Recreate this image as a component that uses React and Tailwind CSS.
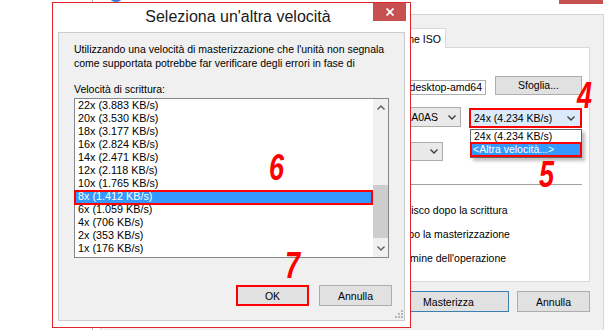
import React from 'react';

const speeds = [
  ['22x', '3.883'],
  ['20x', '3.530'],
  ['18x', '3.177'],
  ['16x', '2.824'],
  ['14x', '2.471'],
  ['12x', '2.118'],
  ['10x', '1.765'],
  ['8x', '1.412'],
  ['6x', '1.059'],
  ['4x', '706'],
  ['2x', '353'],
  ['1x', '176'],
];

function ChevronDown({ className = '' }) {
  return (
    <svg width="8" height="5" viewBox="0 0 8 5" fill="none" stroke="currentColor" strokeWidth="1.4" className={className}>
      <path d="M0.5 0.5 4 4 7.5 0.5" />
    </svg>
  );
}

function ChevronUp({ className = '' }) {
  return (
    <svg width="8" height="5" viewBox="0 0 8 5" fill="none" stroke="currentColor" strokeWidth="1.4" className={className}>
      <path d="M0.5 4.5 4 1 7.5 4.5" />
    </svg>
  );
}

function CloseX() {
  return (
    <svg width="8" height="8" viewBox="0 0 8 8" stroke="white" strokeWidth="1.8">
      <path d="M0.5 0.5 7.5 7.5M7.5 0.5 0.5 7.5" />
    </svg>
  );
}

// red step numbers drawn over the screenshot
function Marker({ n, className }) {
  return (
    <span className={`absolute z-20 origin-left scale-x-75 text-[36px] leading-none font-bold italic text-[#ff0000] ${className}`}>
      {n}
    </span>
  );
}

function Combo({ value, className = '' }) {
  return (
    <div className={`flex items-center justify-end gap-[10px] overflow-hidden whitespace-nowrap border border-[#acacac] bg-[#e9e9e9] pr-[4px] ${className}`}>
      <span>{value}</span>
      <ChevronDown className="shrink-0 text-[#3c3c3c]" />
    </div>
  );
}

function BurnWindow() {
  return (
    <div className="absolute left-[92px] top-[-22px] flex h-[360px] w-[520px] flex-col border border-[#b4b4b4] bg-white">
      <div className="flex h-[35px] shrink-0 items-start">
        <div className="ml-[15px] mt-[7px] h-[16px] w-[16px] rounded-full bg-[#2f7bd6]" />
        <div className="flex-1 pl-[16px] pt-[6px] text-center text-[15px] leading-[20px] text-[#333333]">Masterizzazione ISO</div>
        <div className="mr-[8px] flex h-[25px] w-[44px] items-end justify-center bg-[#c75050] pb-[6px]">
          <CloseX />
        </div>
      </div>

      <div className="mx-[7px] flex flex-1 flex-col border border-[#d5d5d5] bg-[#f0f0f0] px-[13px] pt-[13px]">
        {/* tabs */}
        <div className="flex h-[19px] items-end">
          {['Disco dati', 'Disco audio', 'Copia disco'].map((t) => (
            <div key={t} className="flex h-[17px] w-[75px] items-center justify-center border border-b-0 border-[#d9d9d9] bg-[#f0f0f0]">
              {t}
            </div>
          ))}
          <div className="relative z-10 -mb-px flex h-[20px] items-center border border-b-0 border-[#d9d9d9] bg-white px-[4px]">
            Masterizzazione ISO
          </div>
        </div>

        {/* tab page */}
        <div className="flex h-[235px] flex-col border border-[#d9d9d9] bg-white px-[7px]">
          <div className="mt-[28px] flex h-[19px] items-start">
            <span className="w-[72px] leading-[19px]">Immagine:</span>
            <div className="mt-[4px] flex h-[15px] flex-1 justify-end overflow-hidden whitespace-nowrap border border-[#abadb3] bg-white pr-[3px] leading-[13px]">
              C:\Users\Utente\Downloads\ubuntu-14.04-desktop-amd64
            </div>
            <button className="ml-[9px] h-[19px] w-[87px] border border-[#adadad] bg-[#e1e1e1] leading-[17px]">Sfoglia...</button>
          </div>

          <div className="mt-[12px] flex h-[21px] items-start">
            <span className="w-[72px] leading-[20px]">Unità:</span>
            <Combo value="E: HL-DT-ST DVDRAM GH24NSB0 BA0AS" className="h-[20px] flex-1" />
            <div className="ml-[8px] mt-[1px] flex h-[20px] w-[113px] items-center justify-between border-2 border-[#ff0000] bg-[#dcebfc] pl-[3px] pr-[5px]">
              <span>24x (4.234 KB/s)</span>
              <ChevronDown className="text-[#3c3c3c]" />
            </div>
          </div>

          <div className="mt-[14px] flex h-[19px]">
            <span className="w-[72px] leading-[19px]">Copie:</span>
            <Combo value="" className="h-[19px] flex-1" />
            <div className="w-[139px]" />
          </div>

          <div className="mt-[23px] h-px bg-[#a0a0a0]" />

          <div className="mt-[13px] flex flex-col pl-[224px]">
            {['Espelli il disco dopo la scrittura', 'Chiudi dopo la masterizzazione', "Esci al termine dell'operazione"].map((t) => (
              <label key={t} className="flex h-[24px] items-center gap-[5px] whitespace-nowrap">
                <span className="h-[13px] w-[13px] shrink-0 border border-[#707070] bg-white" />
                {t}
              </label>
            ))}
          </div>
        </div>

        <div className="mt-[9px] flex justify-end gap-[8px]">
          <button className="h-[21px] w-[121px] border border-[#3c7fb1] bg-[#e1e1e1]">Masterizza</button>
          <button className="h-[21px] w-[73px] border border-[#adadad] bg-[#e1e1e1]">Annulla</button>
        </div>
      </div>
    </div>
  );
}

function SpeedPopup() {
  return (
    <div className="absolute left-[470px] top-[129px] z-10 flex w-[112px] flex-col border border-[#646464] bg-white shadow-[3px_3px_3px_rgba(0,0,0,0.25)]">
      <div className="h-[12px] pl-[3px] leading-[12px]">24x (4.234 KB/s)</div>
      <div className="-mx-px h-[15px] border-2 border-[#ff0000] bg-[#3399ff] pl-px leading-[11px] text-white">
        &lt;Altra velocità...&gt;
      </div>
    </div>
  );
}

function SpeedDialog() {
  return (
    <div className="absolute left-[52px] top-[2px] z-10 flex h-[326px] w-[359px] flex-col border border-[#e0242a] bg-white">
      <div className="relative flex h-[29px] shrink-0 items-center justify-center pb-[2px] pl-[13px]">
        <span className="text-[16px] leading-[20px] text-[#1a1a1a]">Seleziona un'altra velocità</span>
        <div className="absolute right-[4px] top-0 flex h-[18px] w-[33px] items-center justify-center bg-[#c75050]">
          <CloseX />
        </div>
      </div>

      <div className="relative mx-[5px] mb-[6px] flex flex-1 flex-col border border-[#cccccc] bg-[#f0f0f0] px-[15px] pt-[9px]">
        <p className="h-[28px] overflow-hidden whitespace-nowrap">
          Utilizzando una velocità di masterizzazione che l'unità non segnala
          <br />
          come supportata potrebbe far verificare degli errori in fase di
        </p>
        <p className="mt-[12px]">Velocità di scrittura:</p>

        <div className="relative mt-[2px] flex h-[160px] w-[315px] border border-[#828790] bg-white">
          <ul className="flex-1 text-[10.8px]">
            {speeds.map(([x, kb]) => (
              <li
                key={x}
                className={`h-[13px] whitespace-nowrap pl-[3px] leading-[13px] ${x === '8x' ? 'bg-[#3399ff] text-white' : ''}`}
              >
                {x} ({kb} KB/s)
              </li>
            ))}
          </ul>
          <div className="flex w-[15px] flex-col bg-[#f0f0f0]">
            <div className="flex h-[17px] items-center justify-center text-[#606060]">
              <ChevronUp />
            </div>
            <div className="flex-1">
              <div className="mt-[69px] h-[53px] bg-[#cdcdcd]" />
            </div>
            <div className="flex h-[17px] items-center justify-center text-[#606060]">
              <ChevronDown />
            </div>
          </div>
          <div className="absolute -left-px top-[91px] h-[15px] w-[299px] border-2 border-[#ff0000]" />
        </div>

        <div className="-mr-[3px] mt-[27px] flex justify-end gap-[10px]">
          <button className="h-[21px] w-[73px] border-2 border-[#ff0000] bg-[#e1e1e1]">OK</button>
          <button className="h-[21px] w-[73px] border border-[#adadad] bg-[#e1e1e1]">Annulla</button>
        </div>

        <svg width="8" height="8" viewBox="0 0 8 8" className="absolute bottom-[2px] right-[1px]" fill="#b5b5b5">
          <rect x="6" y="0" width="2" height="2" />
          <rect x="3" y="3" width="2" height="2" />
          <rect x="6" y="3" width="2" height="2" />
          <rect x="0" y="6" width="2" height="2" />
          <rect x="3" y="6" width="2" height="2" />
          <rect x="6" y="6" width="2" height="2" />
        </svg>
      </div>
    </div>
  );
}

export default function App() {
  return (
    <div className="relative h-[330px] w-[610px] overflow-hidden bg-white font-['Liberation_Sans',Arial,sans-serif] text-[10.5px] leading-[14px] text-black">
      <BurnWindow />
      <SpeedPopup />
      <SpeedDialog />
      <Marker n="4" className="left-[577px] top-[78px]" />
      <Marker n="5" className="left-[539px] top-[157px]" />
      <Marker n="6" className="left-[269px] top-[150px]" />
      <Marker n="7" className="left-[285px] top-[248px]" />
    </div>
  );
}
